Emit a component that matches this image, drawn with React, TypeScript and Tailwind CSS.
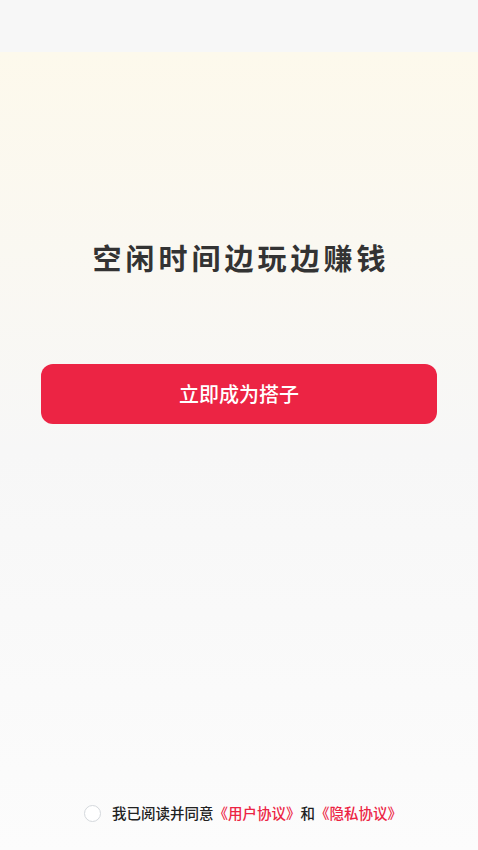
import React, { useState } from "react";

export default function App() {
    const [agreed, setAgreed] = useState(false);

    return (
        <div
            className="flex h-[850px] w-full flex-col bg-[#f7f7f7]"
            style={{ fontFamily: '"Noto Sans CJK SC", "Noto Sans", sans-serif' }}
        >
            {/* status bar area */}
            <div className="h-[52px] shrink-0 bg-[#f7f7f7]" />

            <div className="flex flex-1 flex-col bg-gradient-to-b from-[#fdf9ec] via-[#f7f7f7] to-[#fcfcfc]">
                <h1 className="pt-[191px] pl-[4px] text-center text-[29px] font-bold leading-[29px] tracking-[4px] text-[#333333]">
                    空闲时间边玩边赚钱
                </h1>

                <div className="px-[41px] pt-[92px]">
                    <button
                        type="button"
                        className="flex h-[60px] w-full items-center justify-center rounded-[12px] bg-[#ec2444] text-[20px] font-medium text-white"
                    >
                        立即成为搭子
                    </button>
                </div>

                <div className="flex-1" />

                {/* agreement */}
                <div className="flex items-center justify-center gap-[11px] pb-[27px] pl-[8px]">
                    <button
                        type="button"
                        onClick={() => setAgreed(!agreed)}
                        className={`h-[17px] w-[17px] shrink-0 rounded-full border ${agreed ? "border-[#ec2444] bg-[#ec2444]" : "border-[#d4d8dc] bg-white"}`}
                    />
                    <p className="text-[14.5px] font-medium leading-[20px] text-[#222222]">
                        我已阅读并同意<span className="text-[#ec2444]">《用户协议》</span>和<span className="text-[#ec2444]">《隐私协议》</span>
                    </p>
                </div>
            </div>
        </div>
    );
}
